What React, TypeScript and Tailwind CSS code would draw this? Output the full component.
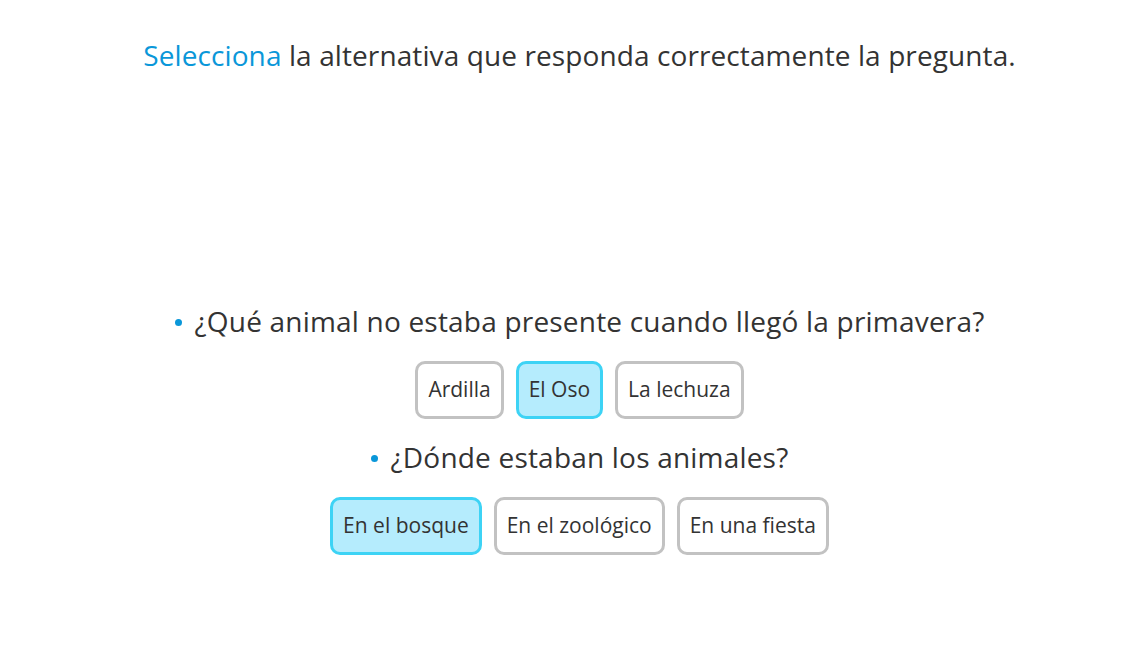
const questions = [
  {
    text: '¿Qué animal no estaba presente cuando llegó la primavera?',
    options: ['Ardilla', 'El Oso', 'La lechuza'],
    selected: 1,
  },
  {
    text: '¿Dónde estaban los animales?',
    options: ['En el bosque', 'En el zoológico', 'En una fiesta'],
    selected: 0,
  },
];

export default function App() {
  return (
    <div
      className="min-h-[672px] w-full bg-white pl-[36px] text-[#333333]"
      style={{ fontFamily: '"Open Sans", "Noto Sans", sans-serif' }}
    >
      <div className="flex flex-col items-center pt-[36px]">
        <p className="text-[28px] leading-[38px] tracking-[0.1px]">
          <span className="text-[#0a97d9]">Selecciona</span> la alternativa que responda correctamente la pregunta.
        </p>

        <div className="mt-[229px] flex flex-col items-center">
          {questions.map((q, qi) => (
            <div key={qi} className="flex flex-col items-center">
              <div className={`flex items-center gap-[13px] ${qi > 0 ? 'mt-[20px]' : ''}`}>
                <span className="mt-[2px] h-[7px] w-[7px] rounded-full bg-[#0a97d9]" />
                <span className="text-[28px] leading-[36px] tracking-[0.2px]">{q.text}</span>
              </div>
              <div className="mt-[22px] flex gap-[12px]">
                {q.options.map((o, oi) => (
                  <button
                    key={oi}
                    className={
                      oi === q.selected
                        ? 'h-[58px] rounded-[10px] border-[3px] border-[#3dd3f5] bg-[#b5ecfd] px-[10px] text-[21px] text-[#333333]'
                        : 'h-[58px] rounded-[10px] border-[3px] border-[#c2c2c2] bg-white px-[10px] text-[21px] text-[#333333]'
                    }
                  >
                    {o}
                  </button>
                ))}
              </div>
            </div>
          ))}
        </div>
      </div>
    </div>
  );
}
